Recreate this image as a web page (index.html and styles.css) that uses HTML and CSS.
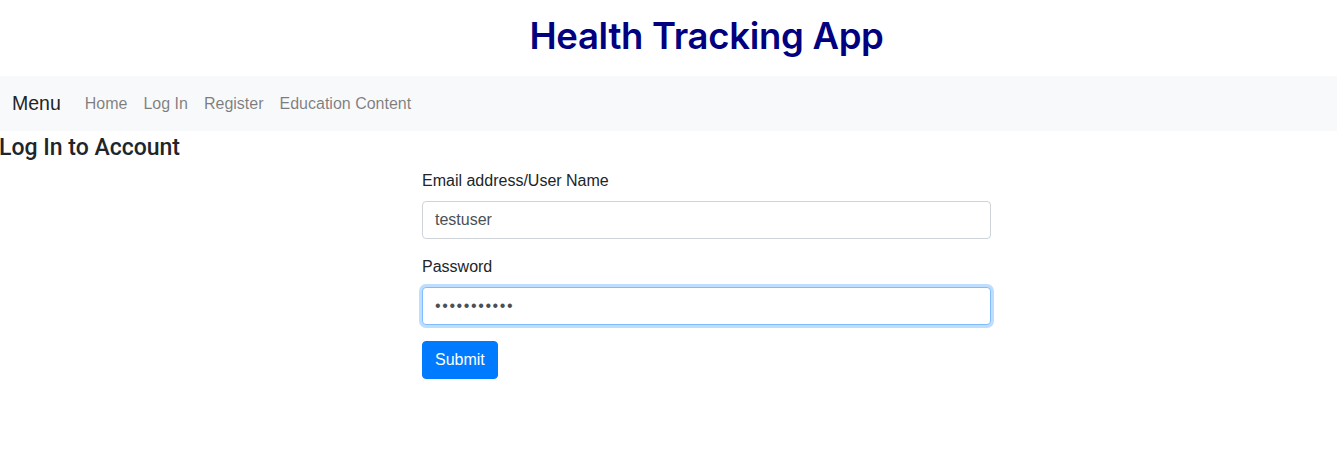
FILE: index.html
```html
<!DOCTYPE html>
<html lang="en">
<head>
<meta charset="utf-8">
<title>Health Tracking App</title>
<link rel="stylesheet" href="styles.css">
</head>
<body>
<header class="site-header">
  <h1 class="site-title">Health Tracking App</h1>
</header>
<nav class="navbar">
  <span class="brand">Menu</span>
  <a class="nav-link" href="#">Home</a>
  <a class="nav-link" href="#">Log In</a>
  <a class="nav-link" href="#">Register</a>
  <a class="nav-link" href="#">Education Content</a>
</nav>
<main class="page">
  <h4 class="page-title">Log In to Account</h4>
  <div class="form-wrap">
    <form class="login-form">
      <div class="form-group">
        <label class="form-label" for="user">Email address/User Name</label>
        <input class="form-control" id="user" type="text" value="testuser">
      </div>
      <div class="form-group">
        <label class="form-label" for="pw">Password</label>
        <input class="form-control is-focused pw" id="pw" type="password" value="testuser123" autofocus>
      </div>
      <button class="btn-primary" type="button">Submit</button>
    </form>
  </div>
</main>
</body>
</html>
```
FILE: styles.css
```css
* { box-sizing: border-box; }
html, body { margin: 0; padding: 0; }
body {
  font-family: "Liberation Sans", Arial, sans-serif;
  font-size: 16px;
  color: #212529;
  background: #fff;
  width: 1337px;
  overflow: hidden;
}
.site-header {
  padding-left: 76px;
  padding-bottom: 4px;
  height: 76px;
  display: flex;
  align-items: center;
  justify-content: center;
}
.site-title {
  margin: 0;
  font-family: Inter, "Liberation Sans", sans-serif;
  font-weight: 600;
  font-size: 36.5px;
  color: #000080;
  letter-spacing: -0.3px;
}
.navbar {
  background: #f8f9fa;
  height: 55px;
  display: flex;
  align-items: center;
  padding: 0 12px;
}
.brand {
  font-size: 19.5px;
  color: #212529;
  margin-right: 24px;
}
.nav-link {
  color: rgba(0,0,0,0.5);
  text-decoration: none;
  font-size: 16px;
  margin-right: 16px;
}
.page-title {
  margin: 2px 0 6px -1px;
  font-family: Roboto, "Liberation Sans", sans-serif;
  font-size: 23px;
  font-weight: 500;
  line-height: 30px;
  color: #212529;
}
.form-wrap {
  padding-left: 76px;
  display: flex;
  justify-content: center;
}
.login-form {
  width: 569px;
}
.form-group { margin-bottom: 16px; }
.form-label {
  display: block;
  font-size: 16px;
  line-height: 24px;
  margin-bottom: 8px;
}
.form-control {
  display: block;
  width: 100%;
  height: 38px;
  padding: 6px 12px;
  font-family: "Liberation Sans", Arial, sans-serif;
  font-size: 16px;
  color: #495057;
  background: #fff;
  border: 1px solid #ced4da;
  border-radius: 4px;
  outline: none;
}
.form-control.pw {
  letter-spacing: 1.6px;
}
.form-control.is-focused,
.form-control:focus {
  border-color: #80bdff;
  box-shadow: 0 0 0 3px rgba(0,123,255,0.25);
}
.btn-primary {
  display: block;
  font-family: "Liberation Sans", Arial, sans-serif;
  font-size: 16px;
  color: #fff;
  background: #007bff;
  border: 1px solid #007bff;
  border-radius: 4px;
  height: 38px;
  padding: 0 12px;
  margin: 0;
}
```
